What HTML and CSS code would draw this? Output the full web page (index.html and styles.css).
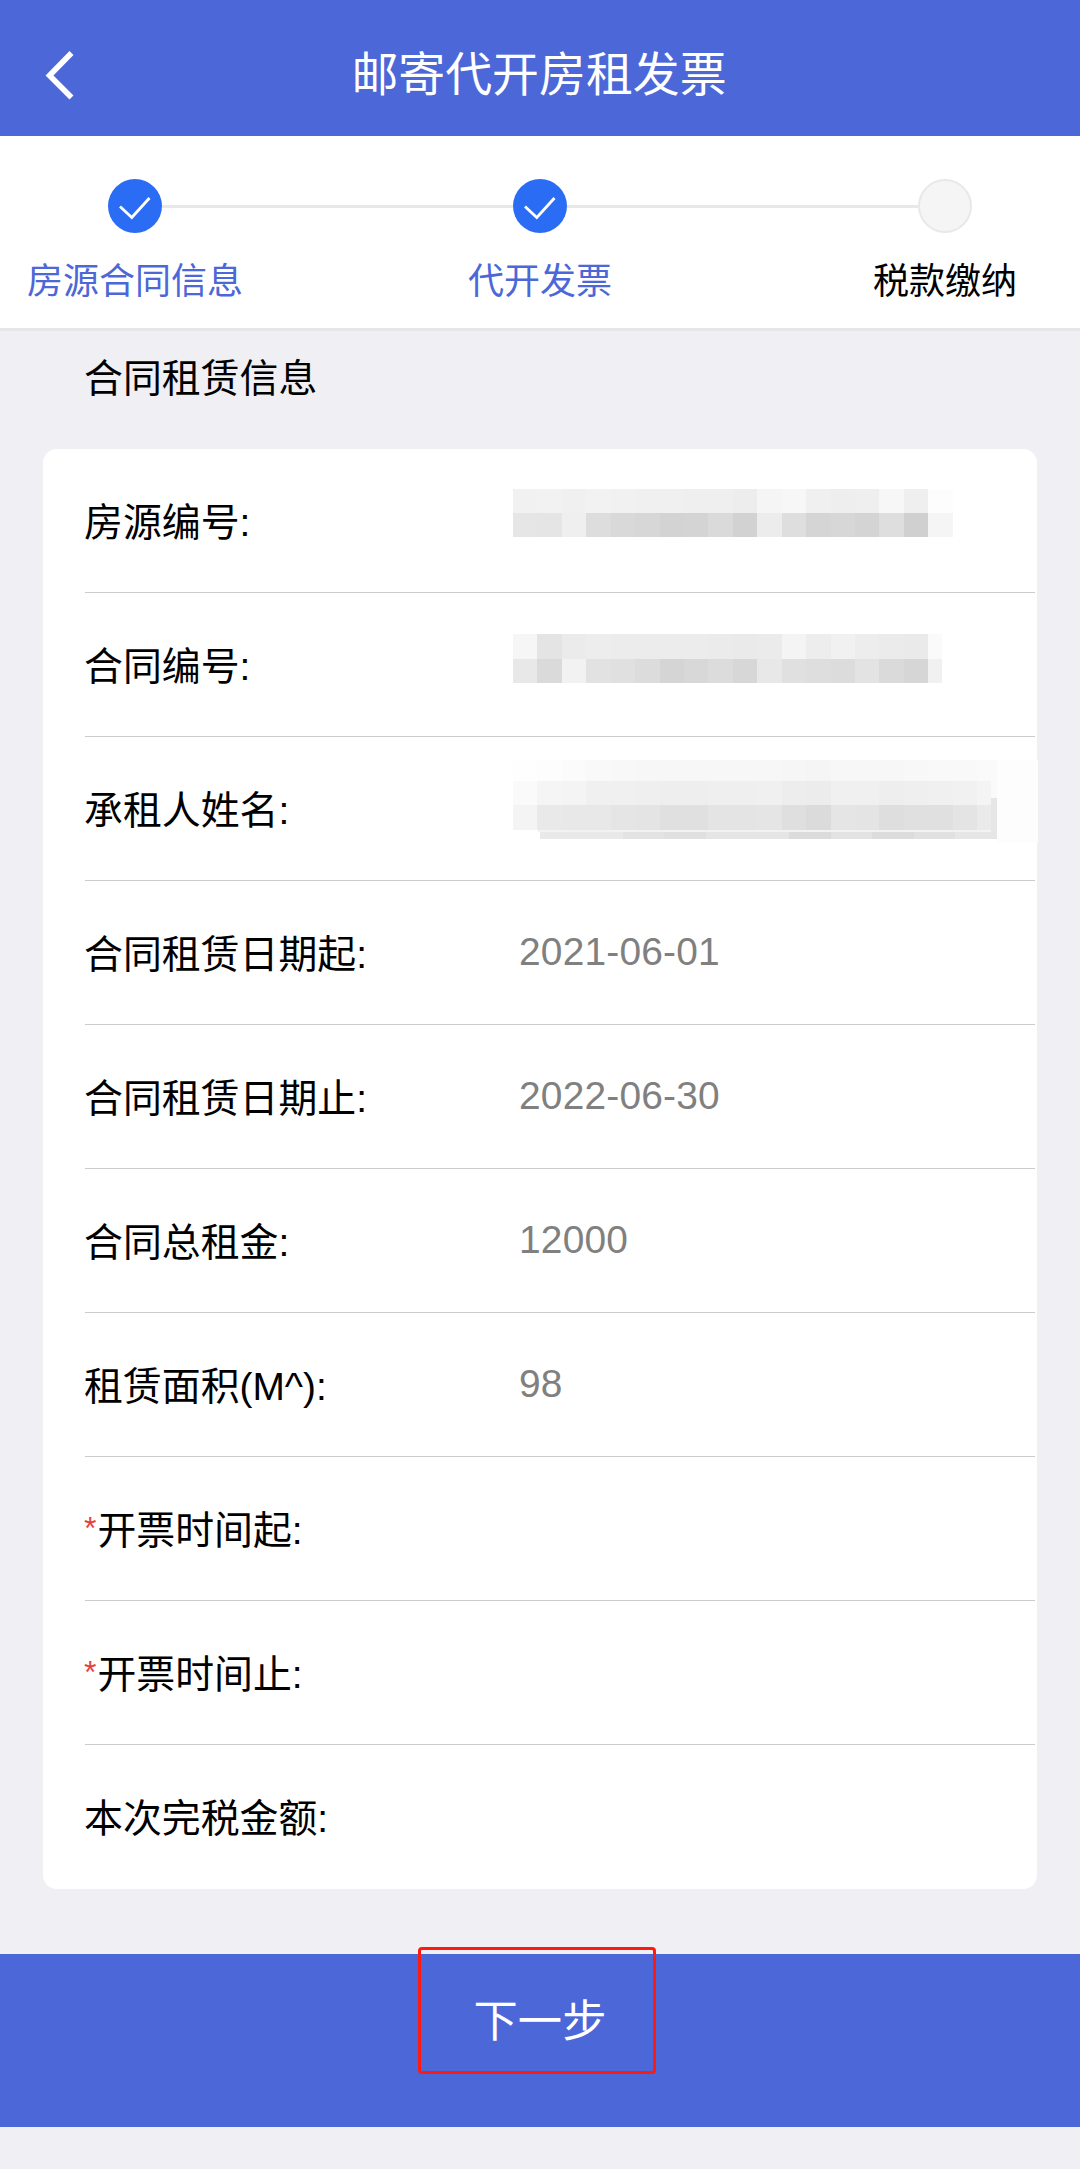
FILE: index.html
```html
<!DOCTYPE html>
<html lang="zh-CN">
<head>
  <meta charset="UTF-8">
  <meta name="viewport" content="width=device-width, initial-scale=1.0">
  <title>邮寄代开房租发票</title>
  <link rel="stylesheet" href="styles.css">
</head>
<body>
  <header class="navbar">
    <svg class="back" width="36" height="56" viewBox="0 0 36 56" fill="none" stroke="#fff" stroke-width="5.6">
      <path d="M30.5 6L8.5 28.5L30.5 50.5"/>
    </svg>
    <h1>邮寄代开房租发票</h1>
  </header>

  <div class="steps">
    <div class="step done">
      <div class="dot">
        <svg width="54" height="54" viewBox="0 0 54 54" fill="none" stroke="#fff" stroke-width="2.8">
          <path d="M12 27.5L23.8 38.5L41.5 19"/>
        </svg>
      </div>
      <span>房源合同信息</span>
    </div>
    <div class="step done">
      <div class="dot">
        <svg width="54" height="54" viewBox="0 0 54 54" fill="none" stroke="#fff" stroke-width="2.8">
          <path d="M12 27.5L23.8 38.5L41.5 19"/>
        </svg>
      </div>
      <span>代开发票</span>
    </div>
    <div class="step">
      <div class="dot"></div>
      <span>税款缴纳</span>
    </div>
  </div>

  <h2>合同租赁信息</h2>

  <div class="card">
    <div class="row"><label>房源编号:</label><svg class="mosaic house" width="440" height="48"></svg></div>
    <div class="row"><label>合同编号:</label><svg class="mosaic contract" width="440" height="49"></svg></div>
    <div class="row"><label>承租人姓名:</label><svg class="mosaic tenant" width="525" height="83"></svg></div>
    <div class="row"><label>合同租赁日期起:</label><span class="value">2021-06-01</span></div>
    <div class="row"><label>合同租赁日期止:</label><span class="value">2022-06-30</span></div>
    <div class="row"><label>合同总租金:</label><span class="value">12000</span></div>
    <div class="row"><label>租赁面积(M^):</label><span class="value">98</span></div>
    <div class="row"><label><i>*</i>开票时间起:</label></div>
    <div class="row"><label><i>*</i>开票时间止:</label></div>
    <div class="row"><label>本次完税金额:</label></div>
  </div>

  <div class="next">
    <span>下一步</span>
    <div class="mark"></div>
  </div>

  <script>
    // Masked values: rows of grey levels, one per cell
    const CELL = 24.43;

    function rect(svg, x, y, w, h, grey) {
      const r = document.createElementNS('http://www.w3.org/2000/svg', 'rect');
      r.setAttribute('x', x);
      r.setAttribute('y', y);
      r.setAttribute('width', w);
      r.setAttribute('height', h);
      r.setAttribute('fill', '#' + grey + grey + grey);
      svg.appendChild(r);
    }

    function cells(svg, y, h, greys, end) {
      greys.split(' ').forEach((grey, i) => {
        const x = i * CELL;
        rect(svg, x, y, Math.min(CELL, end - x), h, grey);
      });
    }

    const house = document.querySelector('.house');
    cells(house, 0, 23.5, 'f1 f2 f0 f2 f1 f0 f0 ef ef ed f5 f7 f0 ee ef f7 ef fd', 440);
    cells(house, 23.5, 24.3, 'e6 e5 ef dd d9 d7 d3 d4 da d2 ec de d5 d7 d4 de d0 f5', 440);

    const contract = document.querySelector('.contract');
    cells(contract, 0, 24.5, 'f6 e4 eb ed ec ec ec ec eb ea eb f4 ed f1 ed eb ea fa', 429);
    cells(contract, 24.5, 24.5, 'e8 da f2 e2 e0 dc d5 d8 dc d7 e8 e0 de dc e3 da d6 f1', 429);

    const tenant = document.querySelector('.tenant');
    rect(tenant, 484, 0, 41, 83, 'fd');
    cells(tenant, 0, 21, 'fe fd fb f9 f8 f7 f7 f7 f7 f7 f7 f6 f5 f7 f7 f7 f8 f9 f9 fa', 484);
    cells(tenant, 21, 24, 'fa f5 f4 f0 f0 ef ee ee ef ef f0 ed ec f0 f0 ee ef f0 f1 f4', 478);
    cells(tenant, 45, 25, 'f4 e9 e8 e8 e5 e4 e0 e0 e4 e4 e5 df db e5 e4 de e0 e0 e4 ea', 478);
    rect(tenant, 478, 0, 6, 38, 'fa');
    rect(tenant, 478, 38, 6, 41, 'e6');
    // thin strip under the last row
    rect(tenant, 25, 70, 453, 2, 'f2');
    rect(tenant, 27, 72, 83, 7, 'e9');
    rect(tenant, 110, 72, 41, 7, 'e3');
    rect(tenant, 151, 72, 42, 7, 'e0');
    rect(tenant, 193, 72, 83, 7, 'e5');
    rect(tenant, 276, 72, 42, 7, 'db');
    rect(tenant, 318, 72, 41, 7, 'e3');
    rect(tenant, 359, 72, 42, 7, 'dc');
    rect(tenant, 401, 72, 41, 7, 'e1');
    rect(tenant, 442, 72, 36, 7, 'e6');
  </script>
</body>
</html>
```

FILE: styles.css
```css
* { box-sizing: border-box; }
body {
  margin: 0;
  background: #efeff4;
  color: #000;
  font-family: 'Liberation Sans', 'Noto Sans CJK SC', sans-serif;
  font-size: 38.88px;
}
h1, h2 { margin: 0; font-weight: 400; }

.navbar {
  height: 136px;
  padding: 14px 43px 0 41px;
  display: flex;
  align-items: center;
  background: #4c67d7;
  color: #fff;
}
.navbar h1 {
  flex: 1;
  margin-right: 36px;
  font-size: 46.9px;
  line-height: 68px;
  text-align: center;
}
.back { display: block; }

.steps {
  height: 195px;
  display: flex;
  justify-content: space-between;
  background: #fff;
  border-bottom: 3px solid #e6e6e8;
}
.step {
  position: relative;
  width: 270px;
  padding-top: 43px;
  display: flex;
  flex-direction: column;
  align-items: center;
}
/* connector to the next dot */
.step:not(:last-child)::after {
  content: '';
  position: absolute;
  left: 162px;
  top: 69px;
  width: 351px;
  height: 3px;
  background: #e8e8e8;
}
.dot {
  width: 54px;
  height: 54px;
  border-radius: 50%;
  background: #f5f5f5;
  border: 2px solid #e8e8e8;
}
.dot svg { display: block; }
.done .dot { background: #2a6df4; border: 0; }
.step span { margin-top: 24px; font-size: 36px; line-height: 50px; white-space: nowrap; }
.done span { color: #4c67d7; }

h2 {
  padding: 20px 84px 0;
  height: 118px;
  font-size: 38.88px;
  line-height: 56px;
}

.card {
  margin: 0 43px;
  padding: 0 2px 0 42px;
  background: #fff;
  border-radius: 14px;
}
.row {
  height: 144px;
  display: flex;
  align-items: center;
  border-bottom: 1px solid #ccc;
}
.row:last-child { border-bottom: 0; }
.row label {
  flex: none;
  width: 435px;
  margin-left: -1px;
  padding-top: 4px;
  line-height: 56px;
  white-space: nowrap;
}
.row i {
  margin-right: 1px;
  color: #e5413a;
  font-size: 32px;
  font-style: normal;
  line-height: 1;
  vertical-align: 5px;
}
.value { color: #808080; line-height: 44px; margin-bottom: 2px; letter-spacing: 0.2px; }

.mosaic { display: block; flex: none; align-self: flex-start; margin-left: -6px; shape-rendering: crispEdges; }
.house { margin-top: 40px; }
.contract { margin-top: 41px; }
.tenant { margin-top: 23px; }

.next {
  position: relative;
  height: 173px;
  margin-top: 65px;
  padding-top: 36px;
  background: #4c67d7;
  color: #fff;
  font-size: 44.3px;
  line-height: 64px;
  text-align: center;
}
.mark {
  position: absolute;
  left: 418px;
  top: -7px;
  width: 238px;
  height: 127px;
  border: 3px solid #ff1a0f;
  border-radius: 4px;
}
```
